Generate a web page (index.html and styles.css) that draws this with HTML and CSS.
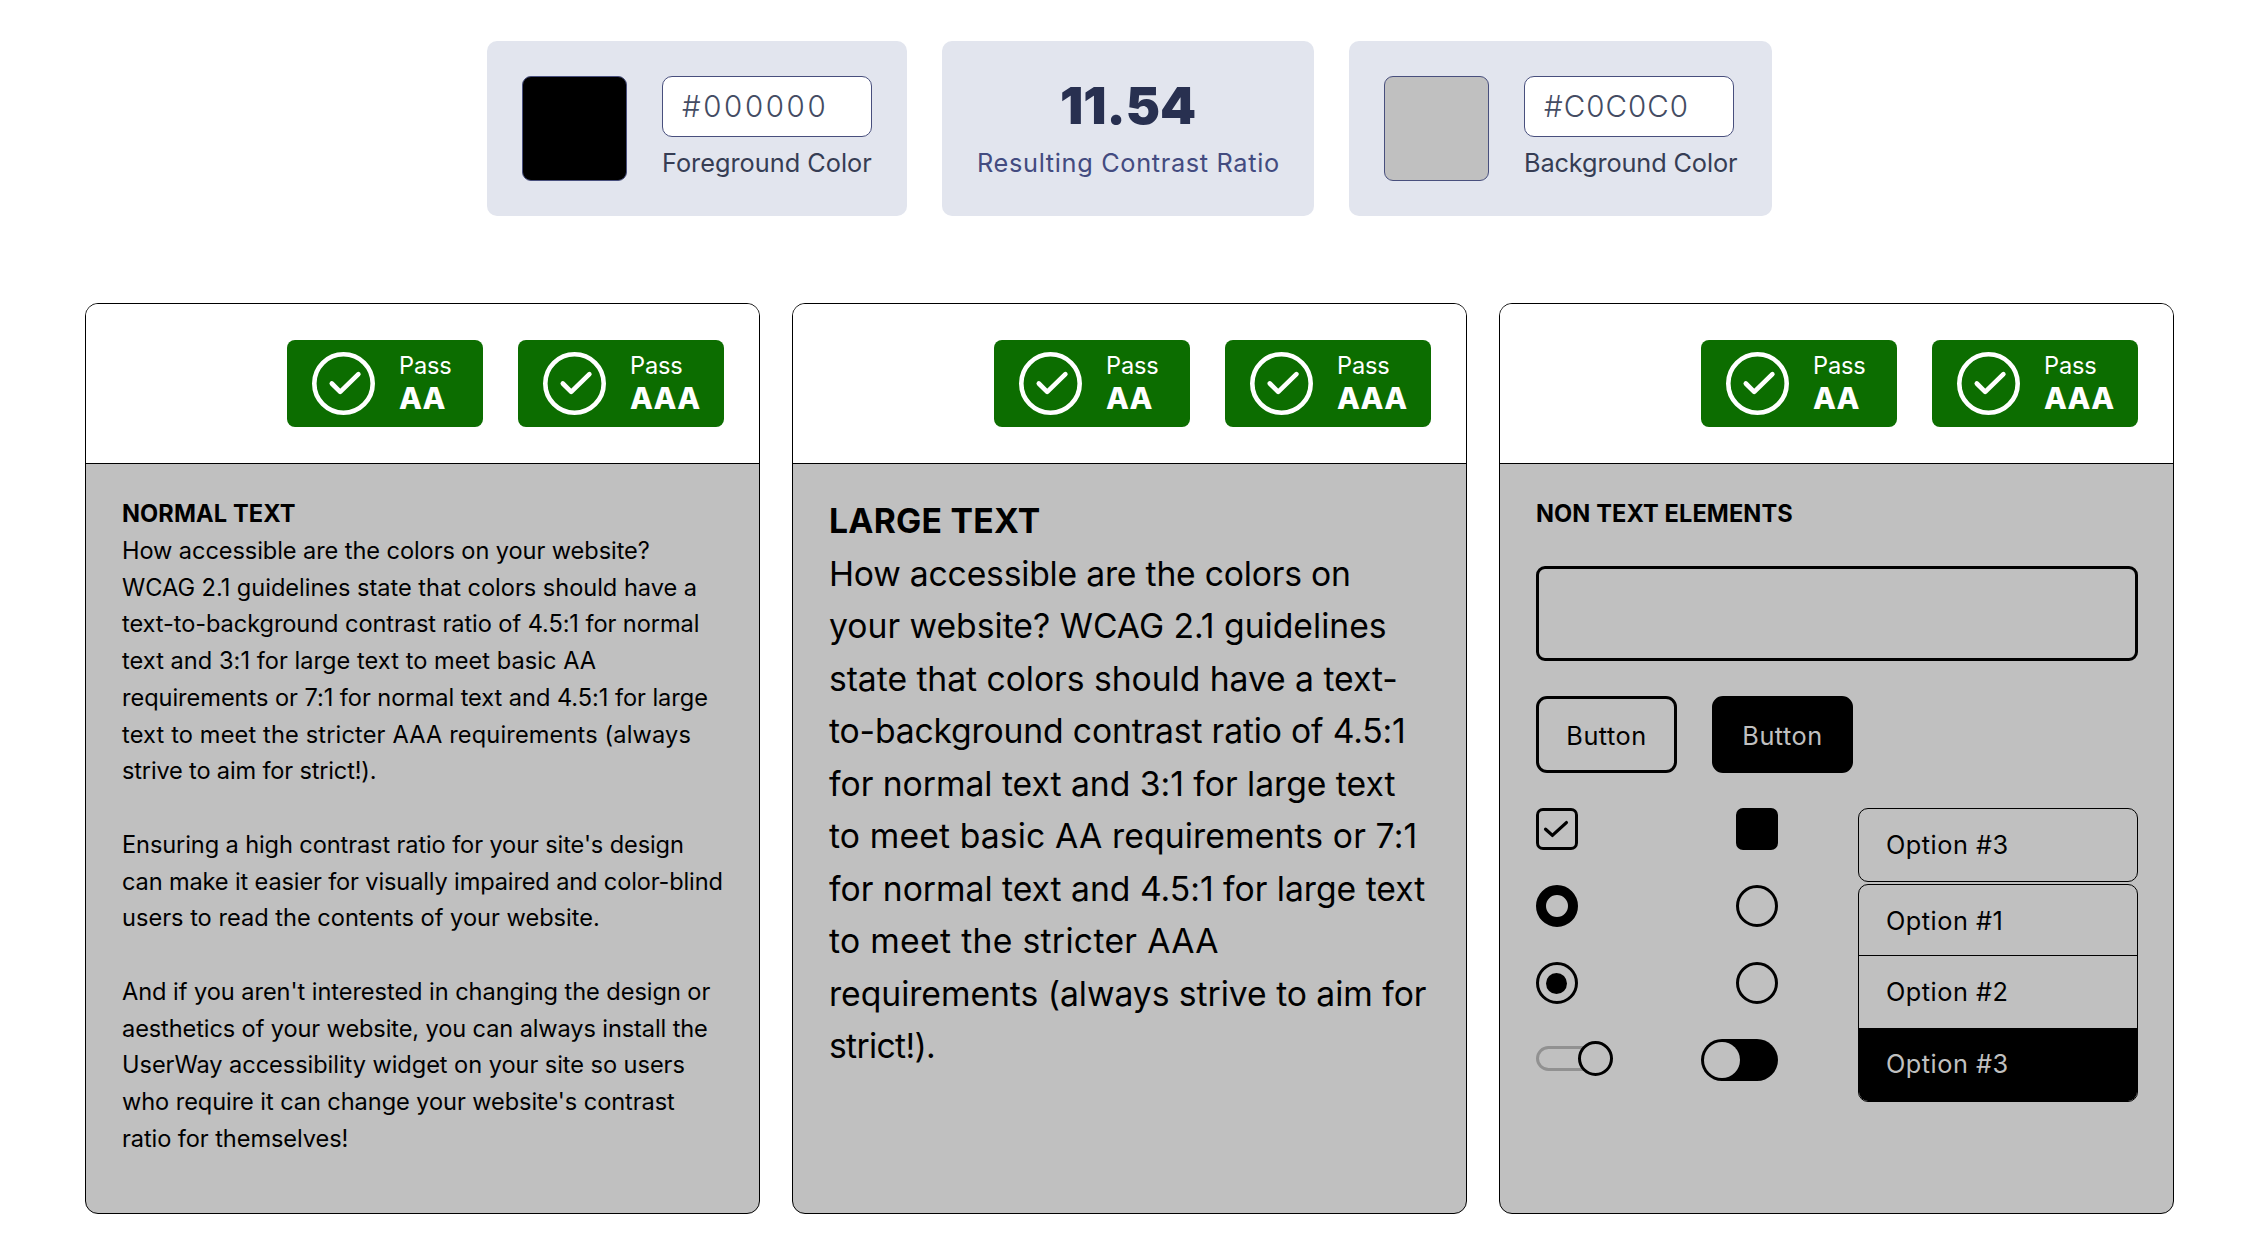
FILE: index.html
```
<!DOCTYPE html>
<html lang="en">
<head>
<meta charset="utf-8">
<title>Color Contrast Checker</title>
<link rel="stylesheet" href="styles.css">
</head>
<body>
<svg class="defs" width="0" height="0" aria-hidden="true">
  <symbol id="ok" viewBox="0 0 63 63"><circle cx="31.5" cy="31.5" r="29.2"/><path d="M19.8 31.5l8.4 8.4 18.2-17.8"/></symbol>
</svg>
<main class="page">
  <section class="summary">
    <div class="tile picker">
      <span class="swatch swatch-fg"></span>
      <div class="field">
        <div class="hex hex-fg">#000000</div>
        <div class="label">Foreground Color</div>
      </div>
    </div>
    <div class="tile result">
      <div class="ratio">11.54</div>
      <div class="label label-result">Resulting Contrast Ratio</div>
    </div>
    <div class="tile picker picker-bg">
      <span class="swatch swatch-bg"></span>
      <div class="field">
        <div class="hex hex-bg">#C0C0C0</div>
        <div class="label label-bg">Background Color</div>
      </div>
    </div>
  </section>
  <section class="panels">
    <article class="panel">
      <header class="verdicts">
        <div class="badge badge-aa"><svg class="ok"><use href="#ok"/></svg><div><div class="pass">Pass</div><div class="level">AA</div></div></div>
        <div class="badge badge-aaa"><svg class="ok"><use href="#ok"/></svg><div><div class="pass">Pass</div><div class="level">AAA</div></div></div>
      </header>
      <div class="body normal">
        <h2>NORMAL TEXT</h2>
        <p>
          <span class="n1">How accessible are the colors on your website?</span>
          <span class="n2">WCAG 2.1 guidelines state that colors should have a</span>
          <span class="n3">text-to-background contrast ratio of 4.5:1 for normal</span>
          <span class="n4">text and 3:1 for large text to meet basic AA</span>
          <span class="n5">requirements or 7:1 for normal text and 4.5:1 for large</span>
          <span class="n6">text to meet the stricter AAA requirements (always</span>
          <span class="n7">strive to aim for strict!).</span>
        </p>
        <p>
          <span class="n8">Ensuring a high contrast ratio for your site's design</span>
          <span class="n9">can make it easier for visually impaired and color-blind</span>
          <span class="n10">users to read the contents of your website.</span>
        </p>
        <p>
          <span class="n11">And if you aren't interested in changing the design or</span>
          <span class="n12">aesthetics of your website, you can always install the</span>
          <span class="n13">UserWay accessibility widget on your site so users</span>
          <span class="n14">who require it can change your website's contrast</span>
          <span class="n15">ratio for themselves!</span>
        </p>
      </div>
    </article>
    <article class="panel">
      <header class="verdicts">
        <div class="badge badge-aa"><svg class="ok"><use href="#ok"/></svg><div><div class="pass">Pass</div><div class="level">AA</div></div></div>
        <div class="badge badge-aaa"><svg class="ok"><use href="#ok"/></svg><div><div class="pass">Pass</div><div class="level">AAA</div></div></div>
      </header>
      <div class="body large">
        <h2>LARGE TEXT</h2>
        <p>
          <span class="l1">How accessible are the colors on</span>
          <span class="l2">your website? WCAG 2.1 guidelines</span>
          <span class="l3">state that colors should have a text-</span>
          <span class="l4">to-background contrast ratio of 4.5:1</span>
          <span class="l5">for normal text and 3:1 for large text</span>
          <span class="l6">to meet basic AA requirements or 7:1</span>
          <span class="l7">for normal text and 4.5:1 for large text</span>
          <span class="l8">to meet the stricter AAA</span>
          <span class="l9">requirements (always strive to aim for</span>
          <span class="l10">strict!).</span>
        </p>
      </div>
    </article>
    <article class="panel">
      <header class="verdicts">
        <div class="badge badge-aa"><svg class="ok"><use href="#ok"/></svg><div><div class="pass">Pass</div><div class="level">AA</div></div></div>
        <div class="badge badge-aaa"><svg class="ok"><use href="#ok"/></svg><div><div class="pass">Pass</div><div class="level">AAA</div></div></div>
      </header>
      <div class="body controls">
        <h2>NON TEXT ELEMENTS</h2>
        <div class="textbox"></div>
        <div class="buttons">
          <div class="btn">Button</div>
          <div class="btn btn-solid">Button</div>
        </div>
        <div class="widgets">
          <div class="toggles">
            <div class="row"><span class="check"><svg viewBox="0 0 42 42"><path d="M9.6 21.2l6.8 6.2L30.4 14.6"/></svg></span><span class="check check-solid"></span></div>
            <div class="row"><span class="radio radio-thick"></span><span class="radio"></span></div>
            <div class="row"><span class="radio"><span class="dot"></span></span><span class="radio"></span></div>
            <div class="row"><span class="slim"><span class="rail"></span><span class="knob"></span></span><span class="switch"><span class="thumb"></span></span></div>
          </div>
          <div class="select">
            <div class="current">Option #3</div>
            <div class="list">
              <div class="opt opt-first">Option #1</div>
              <div class="opt">Option #2</div>
              <div class="opt opt-on">Option #3</div>
            </div>
          </div>
        </div>
      </div>
    </article>
  </section>
</main>
</body>
</html>
```
FILE: styles.css
```
* { box-sizing: border-box; }
body { margin: 0; background: #fff; color: #000; font-family: Inter, "Liberation Sans", sans-serif; font-weight: 400; }
h2, p { margin: 0; }
.defs { display: block; height: 0; }
.page { padding: 41px 75px 29px 85px; }

.summary { display: flex; gap: 35px; padding-left: 402px; }
.tile { height: 175px; padding: 35px; border-radius: 10px; background: #e2e5ee; }
.picker { display: flex; gap: 35px; width: 420px; }
.picker-bg { width: 423px; }
.swatch { width: 105px; height: 105px; border: 1px solid #484f7d; border-radius: 9px; flex: none; }
.swatch-fg { background: #000; }
.swatch-bg { background: #c0c0c0; }
.hex { width: 210px; height: 61px; padding-left: 19px; border: 1px solid #484f7d; border-radius: 10px; background: #fff; color: #444c63; font-size: 29.5px; line-height: 58px; font-weight: 350; }
.hex-fg { letter-spacing: 2.6px; }
.hex-bg { letter-spacing: 1.05px; }
.label { color: #363d54; font-size: 25.3px; line-height: 36px; margin-top: 8px; white-space: nowrap; }
.label-bg { letter-spacing: -.12px; }
.result { width: 372px; text-align: center; }
.ratio { height: 61px; line-height: 59px; font-size: 51.5px; font-weight: 900; color: #283050; }
.label-result { color: #434b80; text-align: left; letter-spacing: .67px; }

.panels { display: flex; gap: 32px; margin-top: 87px; }
.panel { width: 675px; height: 911px; border: 1px solid #000; border-radius: 13px; overflow: hidden; background: #c0c0c0; }
.verdicts { display: flex; justify-content: flex-end; gap: 35px; height: 160px; padding: 36px 35px 0 0; background: #fff; border-bottom: 1px solid #000; }
.badge { display: flex; gap: 24px; height: 87px; padding: 12px 0 0 25px; border-radius: 8px; background: #0c6d00; color: #fff; }
.badge-aa { width: 196px; }
.badge-aaa { width: 206px; }
.ok { width: 63px; height: 63px; fill: none; stroke: #fff; stroke-width: 4.6; stroke-linecap: round; stroke-linejoin: round; }
.pass { font-size: 23.6px; line-height: 28px; letter-spacing: -.14px; }
.level { font-size: 29.8px; line-height: 37px; font-weight: 800; letter-spacing: .2px; }

.body { padding: 32px 34px 0 36px; }
.body h2 { font-weight: 700; font-size: 23.6px; line-height: 36.75px; letter-spacing: .1px; }
.body p span { display: block; width: max-content; white-space: nowrap; }
.normal { font-size: 23.6px; line-height: 36.75px; }
.normal p + p { margin-top: 36.75px; }
.large { padding-top: 31px; font-size: 33.7px; line-height: 52.5px; }
.large h2 { font-size: 33.7px; line-height: 52.5px; letter-spacing: .25px; }

.n1 { letter-spacing: -.087px; }
.n2 { letter-spacing: -.027px; }
.n3 { letter-spacing: -.081px; }
.n4 { letter-spacing: .034px; }
.n5 { letter-spacing: -.047px; }
.n6 { letter-spacing: .145px; }
.n7 { letter-spacing: -.176px; }
.n8 { letter-spacing: -.114px; }
.n9 { letter-spacing: -.146px; }
.n10 { letter-spacing: 0; }
.n11 { letter-spacing: -.057px; }
.n12 { letter-spacing: -.116px; }
.n13 { letter-spacing: -.058px; }
.n14 { letter-spacing: -.081px; }
.n15 { letter-spacing: -.084px; }
.l1 { letter-spacing: -.206px; }
.l2 { letter-spacing: -.004px; }
.l3 { letter-spacing: -.049px; }
.l4 { letter-spacing: -.164px; }
.l5 { letter-spacing: -.026px; }
.l6 { letter-spacing: .133px; }
.l7 { letter-spacing: -.017px; }
.l8 { letter-spacing: .311px; }
.l9 { letter-spacing: -.043px; }
.l10 { letter-spacing: -.676px; }

.controls { padding-right: 35px; }
.textbox { height: 95px; margin-top: 33px; border: 3px solid #000; border-radius: 9px; }
.buttons { display: flex; gap: 35px; margin-top: 35px; }
.btn { width: 141px; height: 77px; border: 3px solid #000; border-radius: 11px; font-size: 25.3px; line-height: 73px; letter-spacing: .5px; text-align: center; }
.btn-solid { background: #000; color: #c0c0c0; }
.widgets { display: flex; gap: 80px; margin-top: 35px; }
.toggles { display: flex; flex-direction: column; gap: 35px; width: 242px; }
.row { display: flex; justify-content: space-between; height: 42px; }
.check { width: 42px; height: 42px; border: 3px solid #000; border-radius: 7px; }
.check svg { display: block; width: 42px; height: 42px; margin: -3px; fill: none; stroke: #000; stroke-width: 3.3; stroke-linecap: round; stroke-linejoin: round; }
.check-solid { background: #000; }
.radio { width: 42px; height: 42px; border: 3px solid #000; border-radius: 50%; }
.radio-thick { border-width: 10px; }
.dot { display: block; width: 21px; height: 21px; margin: 8px 0 0 7px; border-radius: 50%; background: #000; }
.slim { display: flex; align-items: flex-start; height: 35px; margin-top: 2px; }
.rail { width: 60px; height: 25px; margin-top: 5px; border: 3px solid #919191; border-radius: 13px; }
.knob { width: 35px; height: 35px; margin-left: -18px; border: 3px solid #000; border-radius: 50%; background: #c0c0c0; }
.switch { width: 77px; height: 42px; padding: 3px; border-radius: 21px; background: #000; }
.thumb { display: block; width: 36px; height: 36px; border-radius: 50%; background: #c0c0c0; }
.select { width: 280px; font-size: 25.3px; letter-spacing: .5px; }
.current { height: 74px; padding-left: 27px; border: 1px solid #000; border-radius: 10px; line-height: 72px; }
.list { margin-top: 2px; border: 1px solid #000; border-radius: 10px; overflow: hidden; }
.opt { height: 72px; padding-left: 27px; line-height: 71px; }
.opt-first { height: 71px; border-bottom: 1px solid #000; }
.opt-on { height: 73px; background: #000; color: #c0c0c0; }
```
